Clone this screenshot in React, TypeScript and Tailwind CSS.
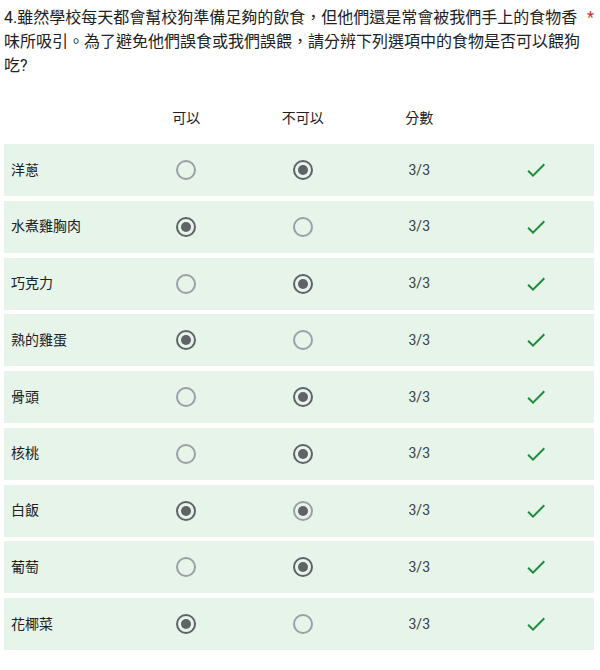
import React from 'react';

type Row = {
  label: string;
  choice: 1 | 2;
  ghost?: boolean;
};

const rows: Row[] = [
  { label: '洋蔥', choice: 2 },
  { label: '水煮雞胸肉', choice: 1 },
  { label: '巧克力', choice: 2 },
  { label: '熟的雞蛋', choice: 1 },
  { label: '骨頭', choice: 2 },
  { label: '核桃', choice: 2 },
  { label: '白飯', choice: 1, ghost: true },
  { label: '葡萄', choice: 2 },
  { label: '花椰菜', choice: 1 },
];

const Radio = ({ checked, ghost }: { checked: boolean; ghost?: boolean }) => {
  if (ghost) {
    return (
      <div className="w-[20px] h-[20px] rounded-full border-2 border-[#9aa0a6] flex items-center justify-center">
        <div className="w-[10px] h-[10px] rounded-full bg-[#5f6368]"></div>
      </div>
    );
  }
  return (
    <div
      className={`w-[20px] h-[20px] rounded-full border-2 flex items-center justify-center ${
        checked ? 'border-[#5f6368]' : 'border-[#9aa0a6]'
      }`}
    >
      {checked && <div className="w-[10px] h-[10px] rounded-full bg-[#5f6368]"></div>}
    </div>
  );
};

const Check = () => (
  <svg width="24" height="24" viewBox="0 0 24 24" fill="#1e8e3e">
    <path d="M9 16.17L4.83 12l-1.42 1.41L9 19 21 7l-1.41-1.41z" />
  </svg>
);

export default function App() {
  return (
    <div
      className="w-[600px] h-[670px] bg-white pt-[6px] text-[#202124]"
      style={{ fontFamily: 'Roboto, "Noto Sans CJK TC", sans-serif' }}
    >
      {/* Question title */}
      <div className="flex pl-[4px]">
        <div className="w-[580px] text-[16px] leading-[24px]">
          4.雖然學校每天都會幫校狗準備足夠的飲食，但他們還是常會被我們手上的食物香味所吸引。為了避免他們誤食或我們誤餵，請分辨下列選項中的食物是否可以餵狗吃?
        </div>
        <span className="ml-[3px] text-[16px] leading-[24px] text-[#d93025]">*</span>
      </div>

      {/* Column headers */}
      <div className="w-[590px] mx-[4px] mt-[30px] grid grid-cols-[124px_repeat(4,1fr)] h-[20px] text-[14px] leading-[20px]">
        <div></div>
        <div className="text-center">可以</div>
        <div className="text-center">不可以</div>
        <div className="text-center">分數</div>
        <div></div>
      </div>

      {/* Grid rows */}
      <div className="w-[590px] mx-[4px] mt-[16px] flex flex-col gap-[4.75px]">
        {rows.map((row, index) => (
          <div
            key={index}
            className="grid grid-cols-[124px_repeat(4,1fr)] items-center h-[52px] bg-[#e6f4ea]"
          >
            <div className="pl-[7px] text-[14px]">{row.label}</div>
            <div className="flex justify-center">
              <Radio checked={row.choice === 1} />
            </div>
            <div className="flex justify-center">
              <Radio checked={row.choice === 2} ghost={row.ghost} />
            </div>
            <div className="text-center text-[14px] text-[#3c4043]">3/3</div>
            <div className="flex justify-center">
              <Check />
            </div>
          </div>
        ))}
      </div>
    </div>
  );
}
